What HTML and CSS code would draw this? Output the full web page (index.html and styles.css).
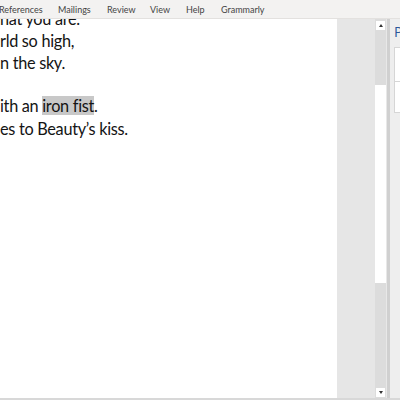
FILE: index.html
```html
<!DOCTYPE html>
<html>
<head>
<meta charset="utf-8">
<link rel="stylesheet" href="styles.css">
</head>
<body>
<div class="window">
  <div class="ribbon">
    <span class="tab t1">References</span>
    <span class="tab t2">Mailings</span>
    <span class="tab t3">Review</span>
    <span class="tab t4">View</span>
    <span class="tab t5">Help</span>
    <span class="tab t6">Grammarly</span>
  </div>
  <div class="main">
    <div class="doc">
      <div class="text">
        <p class="line">hat you are.</p>
        <p class="line">rld so high,</p>
        <p class="line">n the sky.</p>
        <p class="line">&nbsp;</p>
        <p class="line">ith an <span class="hl">iron fist</span>.</p>
        <p class="line">es to Beauty’s kiss.</p>
      </div>
    </div>
    <div class="gutter"></div>
    <div class="scroll">
      <div class="btn"><span class="up"></span></div>
      <div class="track-top"></div>
      <div class="thumb"></div>
      <div class="track-bottom"></div>
      <div class="btn"><span class="down"></span></div>
    </div>
    <div class="sep"></div>
    <div class="pane">
      <div class="pane-title">P</div>
      <div class="box box1"></div>
      <div class="box box2"></div>
    </div>
  </div>
</div>
</body>
</html>
```

FILE: styles.css
```css
html, body {
  margin: 0;
  padding: 0;
}
body {
  width: 400px;
  height: 400px;
  overflow: hidden;
  background: #fff;
}
.window {
  width: 400px;
  height: 400px;
  display: flex;
  flex-direction: column;
}
.ribbon {
  height: 18px;
  flex: none;
  background: #f3f2f1;
  border-bottom: 1px solid #e3e1df;
  display: flex;
  align-items: center;
  margin-left: -1px;
  font-family: "Lato", "Open Sans", sans-serif;
  font-size: 9px;
  color: #444;
  position: relative;
  z-index: 2;
}
.tab {
  flex: none;
  white-space: nowrap;
}
.t1 { width: 59px; }
.t2 { width: 49px; }
.t3 { width: 43px; }
.t4 { width: 36px; }
.t5 { width: 35px; }
.text {
  margin-top: -11px;
  font-family: "Lato", "Open Sans", sans-serif;
  font-size: 16.3px;
  color: #141414;
}
.main {
  flex: 1;
  display: flex;
  min-height: 0;
  border-bottom: 2px solid #d8d8d8;
}
.doc {
  width: 337px;
  flex: none;
  background: #fff;
  overflow: hidden;
}
.line {
  margin: 0;
  height: 22px;
  line-height: 22px;
  white-space: nowrap;
  letter-spacing: -0.3px;
}
.line:nth-child(5) {
  margin-top: -1px;
  margin-bottom: 1px;
}
.hl {
  background: #c8c8c8;
}
.gutter {
  width: 38px;
  flex: none;
  background: #e6e6e6;
}
.scroll {
  width: 11px;
  flex: none;
  background: #dcdcdc;
  display: flex;
  flex-direction: column;
  align-items: center;
  padding-top: 2px;
  padding-bottom: 1px;
  box-sizing: border-box;
}
.btn {
  width: 9px;
  height: 9px;
  background: #fff;
  display: flex;
  align-items: center;
  justify-content: center;
  flex: none;
}
.up {
  width: 0;
  height: 0;
  border-left: 2.5px solid transparent;
  border-right: 2.5px solid transparent;
  border-bottom: 3px solid #333;
}
.down {
  width: 0;
  height: 0;
  border-left: 2.5px solid transparent;
  border-right: 2.5px solid transparent;
  border-top: 3px solid #333;
}
.track-top {
  height: 55px;
  flex: none;
}
.thumb {
  width: 11px;
  height: 198px;
  background: #fff;
  flex: none;
}
.track-bottom {
  flex: 1;
}
.sep {
  width: 3px;
  flex: none;
  background: #d0d0d0;
  border-left: 1px solid #e8e8e8;
}
.pane {
  flex: 1;
  background: #eeeeee;
  padding: 4px 0 0 4px;
  display: flex;
  flex-direction: column;
}
.pane-title {
  font-family: "Open Sans", "Noto Sans", sans-serif;
  font-size: 14px;
  line-height: 18px;
  color: #2b579a;
  height: 24px;
}
.box {
  background: #fff;
  border: 1px solid #d6d6d6;
  border-right: none;
}
.box1 {
  height: 33px;
}
.box2 {
  height: 30px;
  margin-top: -1px;
}
```
